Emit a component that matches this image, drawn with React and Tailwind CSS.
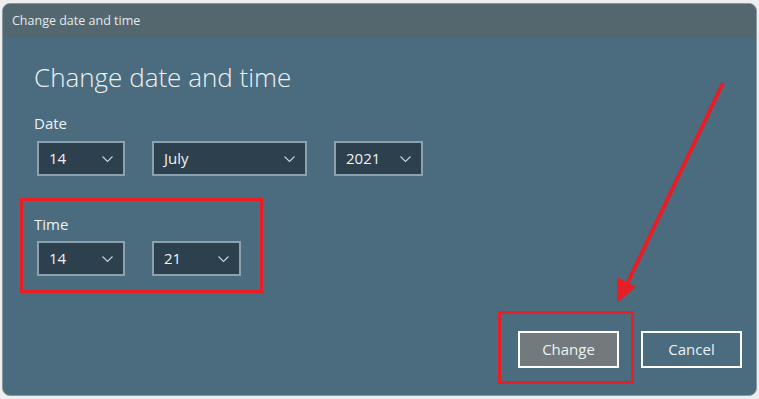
import React from "react";

const Chevron = () => (
  <svg width="11" height="6" viewBox="0 0 11 6" className="shrink-0">
    <polyline points="0.5,0.5 5.5,5.5 10.5,0.5" fill="none" stroke="#c9d3d9" strokeWidth="1.1" />
  </svg>
);

const Select = ({ value, width }) => (
  <div
    className={`flex items-center justify-between h-[35px] border-2 border-[#8ca2af] bg-[#2c404d] pl-[10px] pr-[10px] text-[15px] text-[#eef2f4] ${width}`}
  >
    <span>{value}</span>
    <Chevron />
  </div>
);

export default function App() {
  return (
    <div
      className="relative w-[759px] h-[399px] bg-[#eeeeee] pt-[3px] pl-[2px] pr-[2px] pb-[3px] overflow-hidden"
      style={{ fontFamily: '"Open Sans", "Noto Sans", sans-serif' }}
    >
      {/* Dialog window */}
      <div className="flex flex-col h-full rounded-[8px] overflow-hidden border border-[#8c979e] bg-[#4b6b7f]">
        {/* Title bar */}
        <div className="h-[34px] shrink-0 bg-[#53676f] flex items-center pl-[9px] text-[12.5px] text-[#e3eaee]">
          Change date and time
        </div>

        {/* Body */}
        <div className="flex flex-col flex-1 pl-[17px]">
          <div className="pl-[14px]">
            <h1 className="mt-[19px] text-[26px] font-light leading-[40px] text-[#eef2f4]">
              Change date and time
            </h1>
            <div className="mt-[16px] text-[15px] leading-[20px] text-[#eef2f4]">Date</div>
            <div className="mt-[8px] ml-[3px] flex gap-[27px]">
              <Select value="14" width="w-[88px]" />
              <Select value="July" width="w-[155px]" />
              <Select value="2021" width="w-[89px]" />
            </div>
          </div>

          {/* Time (highlighted) */}
          <div className="mt-[22px] w-[243px] border-[3px] border-[#e81e27] pl-[11px] pt-[13px] pb-[14px]">
            <div className="text-[15px] leading-[20px] text-[#eef2f4]">Time</div>
            <div className="mt-[7px] ml-[3px] flex gap-[27px]">
              <Select value="14" width="w-[88px]" />
              <Select value="21" width="w-[89px]" />
            </div>
          </div>

          {/* Buttons */}
          <div className="mt-auto flex items-end justify-end pr-[14px] pb-[11px]">
            <div className="border-[3px] border-[#e81e27] pl-[17px] pr-[12px] pt-[17px] pb-[13px]">
              <button className="w-[101px] h-[37px] border-2 border-white bg-[#737a7e] text-[15px] text-[#eef2f4]">
                Change
              </button>
            </div>
            <button className="ml-[7px] mb-[16px] w-[101px] h-[37px] border-2 border-white text-[15px] text-[#eef2f4]">
              Cancel
            </button>
          </div>
        </div>
      </div>

      {/* Annotation arrow */}
      <svg className="absolute inset-0 pointer-events-none" width="759" height="399">
        <line x1="723" y1="83" x2="627" y2="284" stroke="#e81e27" strokeWidth="4" />
        <polygon points="617,303 617,277 636,287" fill="#e81e27" />
      </svg>
    </div>
  );
}
